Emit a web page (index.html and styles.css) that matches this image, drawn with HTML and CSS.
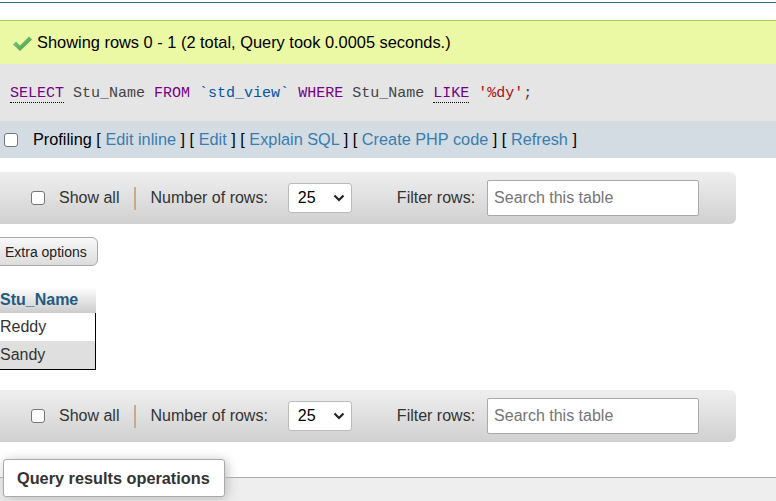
FILE: index.html
```html
<!DOCTYPE html>
<html>
<head>
<meta charset="utf-8">
<link rel="stylesheet" href="styles.css">
</head>
<body>
<div class="topline"></div>
<div class="success">
  <svg class="check" width="19" height="15" viewBox="0 0 19 15"><defs><linearGradient id="g" x1="0" y1="0" x2="1" y2="1"><stop offset="0" stop-color="#86cf86"/><stop offset="1" stop-color="#3c9c3c"/></linearGradient></defs><polygon points="0,8.5 3,5.5 7,9.5 16,0.5 19,3.5 7,15" fill="url(#g)"/></svg>
  <span>Showing rows 0 - 1 (2 total, Query took 0.0005 seconds.)</span>
</div>
<div class="sql"><code><span class="kw">SELECT</span> <span class="id">Stu_Name</span> <span class="kw2">FROM</span> <span class="tb">`std_view`</span> <span class="kw2">WHERE</span> <span class="id">Stu_Name</span> <span class="kw">LIKE</span> <span class="str">'%dy'</span><span class="id">;</span></code></div>
<div class="tools">
  <input type="checkbox" class="cb">
  <span class="prof">Profiling [ <a>Edit inline</a> ] [ <a>Edit</a> ] [ <a>Explain SQL</a> ] [ <a>Create PHP code</a> ] [ <a>Refresh</a> ]</span>
</div>
<div class="navbar">
  <input type="checkbox" class="cb">
  <span class="lbl showall">Show all</span>
  <span class="sep"></span>
  <span class="lbl nrows">Number of rows:</span>
  <div class="select"><span>25</span><svg width="12" height="8" viewBox="0 0 12 8"><path d="M1.5 1.5 L6 6 L10.5 1.5" fill="none" stroke="#222" stroke-width="2.2"/></svg></div>
  <span class="lbl filter">Filter rows:</span>
  <input class="search" type="text" placeholder="Search this table">
</div>
<button class="extra">Extra options</button>
<table class="results">
  <thead><tr><th>Stu_Name</th></tr></thead>
  <tbody>
    <tr class="odd"><td>Reddy</td></tr>
    <tr class="even"><td>Sandy</td></tr>
  </tbody>
</table>
<div class="navbar second">
  <input type="checkbox" class="cb">
  <span class="lbl showall">Show all</span>
  <span class="sep"></span>
  <span class="lbl nrows">Number of rows:</span>
  <div class="select"><span>25</span><svg width="12" height="8" viewBox="0 0 12 8"><path d="M1.5 1.5 L6 6 L10.5 1.5" fill="none" stroke="#222" stroke-width="2.2"/></svg></div>
  <span class="lbl filter">Filter rows:</span>
  <input class="search" type="text" placeholder="Search this table">
</div>
<div class="ops">
  <div class="legend">Query results operations</div>
</div>
</body>
</html>
```
FILE: styles.css
```css
html, body { margin: 0; padding: 0; }
body {
  font-family: "Liberation Sans", Arial, sans-serif;
  font-size: 16px;
  color: #000;
  background: #fff;
  width: 776px;
  height: 501px;
  overflow: hidden;
}
.topline {
  height: 2px;
  border-bottom: 1px solid #3d6a87;
  margin-bottom: 17px;
}
.success {
  background: #ebf8a4;
  border-top: 1px solid #a2d246;
  height: 43px;
  display: flex;
  align-items: center;
  padding-left: 13px;
  gap: 5px;
  color: #000;
  font-size: 16.4px;
}
.check { display: block; margin-top: 2px; }
.sql {
  background: #e5e5e5;
  height: 57px;
  display: flex;
  align-items: center;
  padding-left: 10px;
}
.sql code {
  font-family: "Liberation Mono", "DejaVu Sans Mono", monospace;
  font-size: 15px;
  color: #444;
  margin-top: 2px;
}
.sql .kw { color: #770088; border-bottom: 1px dotted #000; }
.sql .kw2 { color: #770088; }
.sql .tb { color: #0055aa; }
.sql .str { color: #aa1111; }
.tools {
  background: #d3dce3;
  height: 37px;
  display: flex;
  align-items: center;
  padding-left: 4px;
}
.cb {
  appearance: none;
  -webkit-appearance: none;
  width: 14px;
  height: 14px;
  margin: 0;
  border: 1px solid #767676;
  border-radius: 3px;
  background: #fff;
  box-sizing: border-box;
  flex: none;
}
.prof { margin-left: 15px; color: #000; font-size: 16.3px; }
.prof a { color: #3a7cb0; text-decoration: none; }
.navbar {
  margin-top: 14px;
  margin-left: -10px;
  width: 746px;
  height: 52px;
  box-sizing: border-box;
  border-radius: 6px;
  background: linear-gradient(#efefef, #d0d0d0);
  display: flex;
  align-items: center;
  padding-left: 41px;
}
.navbar.second { margin-top: 20px; }
.lbl { color: #333; }
.showall { margin-left: 14px; }
.sep {
  width: 2px;
  height: 23px;
  margin-left: 15px;
  background: linear-gradient(to right, #c8ab8a 50%, #9fb3c4 50%);
}
.nrows { margin-left: 14px; }
.select {
  margin-left: 20px;
  width: 64px;
  height: 30px;
  box-sizing: border-box;
  background: #fff;
  border: 1px solid #bbb;
  border-radius: 3px;
  display: flex;
  align-items: center;
  justify-content: space-between;
  padding: 0 6px 0 9px;
  color: #000;
}
.select svg { display: block; }
.filter { margin-left: 45px; }
.search {
  margin-left: 12px;
  width: 212px;
  height: 36px;
  box-sizing: border-box;
  border: 1px solid #aaa;
  border-radius: 2px;
  background: #fff;
  font-family: "Liberation Sans", Arial, sans-serif;
  font-size: 16px;
  padding: 0 6px;
  color: #000;
}
.search::placeholder { color: #757575; }
.extra {
  display: block;
  margin: 13px 0 0 -6px;
  height: 29px;
  padding: 0 10px;
  font-family: "Liberation Sans", Arial, sans-serif;
  font-size: 14px;
  color: #222;
  background: linear-gradient(#f8f8f8, #dcdcdc);
  border: 1px solid #aaa;
  border-radius: 6px;
}
.results {
  margin: 21px 0 0 -6px;
  border-collapse: separate;
  border-spacing: 0;
}
.results th {
  height: 26px;
  padding: 0 18px 0 6px;
  text-align: left;
  font-weight: bold;
  color: #235a81;
  background: linear-gradient(#ffffff, #cccccc);
}
.results td {
  height: 28px;
  padding: 0 0 0 6px;
  color: #333;
  border-right: 1px solid #000;
}
.results tr.odd td { background: #fff; }
.results tr.even td { background: #dfdfdf; border-bottom: 1px solid #000; }
.ops {
  margin-top: 35px;
  border-top: 1px solid #aaa;
  background: #eee;
  height: 23px;
}
.legend {
  display: block;
  width: max-content;
  margin: -19px 0 0 3px;
  height: 38px;
  box-sizing: border-box;
  line-height: 36px;
  padding: 0 14px 0 13px;
  background: #fff;
  border: 1px solid #aaa;
  border-radius: 3px;
  font-weight: bold;
  font-size: 16.3px;
  color: #333;
  box-shadow: 2px 2px 12px #bbb;
}
```
